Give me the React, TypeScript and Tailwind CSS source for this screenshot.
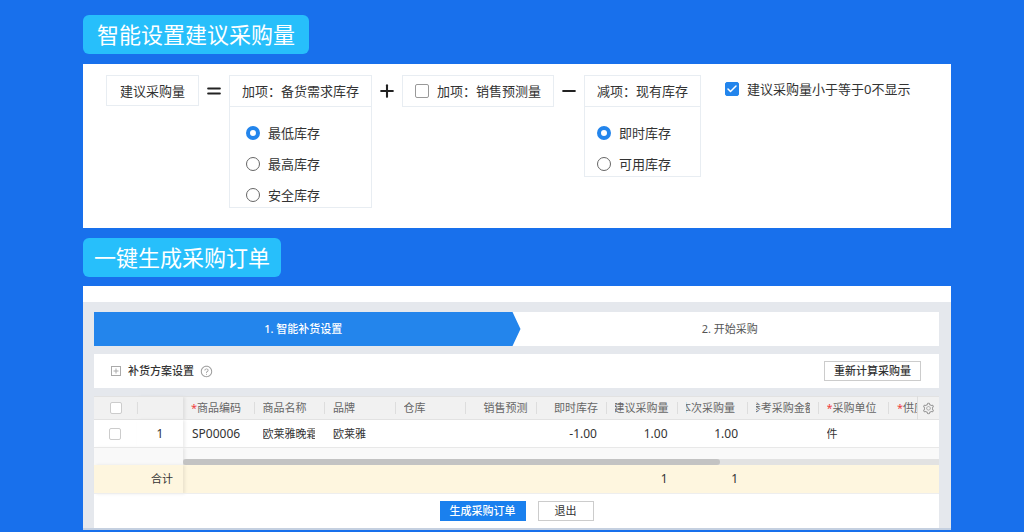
import { useState } from 'react'
import type { ReactNode } from 'react'
import { Check, Equal, Minus, Plus } from 'lucide-react'
import { AiOutlineQuestionCircle, AiOutlineSetting } from 'react-icons/ai'

interface Column {
  key: string
  label: string
  required?: boolean
  align?: string
  value?: string
  total?: string
}

const columns: Column[] = [
  { key: 'code', label: '商品编码', required: true, value: 'SP00006' },
  { key: 'name', label: '商品名称', value: '欧莱雅晚霜' },
  { key: 'brand', label: '品牌', value: '欧莱雅' },
  { key: 'warehouse', label: '仓库' },
  { key: 'forecast', label: '销售预测', align: 'justify-end' },
  { key: 'stock', label: '即时库存', align: 'justify-end', value: '-1.00' },
  { key: 'suggested', label: '建议采购量', align: 'justify-end', value: '1.00', total: '1' },
  { key: 'current', label: '本次采购量', align: 'justify-end', value: '1.00', total: '1' },
  { key: 'amount', label: '参考采购金额', align: 'justify-center' },
  { key: 'unit', label: '采购单位', required: true, value: '件' },
]

function SectionTitle({ className, children }: { className: string; children: ReactNode }) {
  return (
    <h2 className={`flex h-[39px] w-fit items-center rounded-md bg-[#27bffb] pb-0.5 text-[22px] leading-8 text-white ${className}`}>
      {children}
    </h2>
  )
}

function CheckBox({ label, checked, onChange }: { label: string; checked: boolean; onChange: () => void }) {
  return (
    <label className="flex items-center gap-2 whitespace-nowrap">
      <span className="relative flex">
        <input
          type="checkbox"
          checked={checked}
          onChange={onChange}
          className="size-3.5 appearance-none rounded-xs border border-[#999] bg-white checked:border-[#2385ec] checked:bg-[#2385ec]"
        />
        {checked && (
          <Check size={12} strokeWidth={3} className="pointer-events-none absolute top-px left-px text-white" />
        )}
      </span>
      {label}
    </label>
  )
}

interface RadioBoxProps {
  title: string
  name: string
  options: string[]
  indent: string
}

function RadioBox({ title, name, options, indent }: RadioBoxProps) {
  const [selected, setSelected] = useState(options[0])

  return (
    <fieldset className="border border-[#e8edf2]">
      <div className="flex h-[31px] items-center border-b border-[#e8edf2] px-3 whitespace-nowrap">{title}</div>
      <div className={`flex flex-col gap-[7px] pt-3.5 ${indent}`}>
        {options.map(option => (
          <label key={option} className="flex h-6 items-center gap-2">
            <input
              type="radio"
              name={name}
              checked={selected === option}
              onChange={() => setSelected(option)}
              className="size-3.5 appearance-none rounded-full border border-[#666] bg-white checked:border-4 checked:border-[#2385ec]"
            />
            {option}
          </label>
        ))}
      </div>
    </fieldset>
  )
}

function Operator({ children }: { children: ReactNode }) {
  return <div className="flex h-[31px] w-[30px] items-center justify-center text-[#222]">{children}</div>
}

function FormulaCard() {
  const [forecast, setForecast] = useState(false)
  const [hideEmpty, setHideEmpty] = useState(true)

  return (
    <section className="flex h-[164px] items-start bg-white pt-[11px] pl-[23px] text-[13px] leading-5 text-[#333]">
      <div className="flex h-[31px] items-center border border-[#e8edf2] px-[13px] whitespace-nowrap">建议采购量</div>
      <Operator><Equal size={20} strokeWidth={2.5} /></Operator>
      <RadioBox title="加项：备货需求库存" name="demand" options={['最低库存', '最高库存', '安全库存']} indent="pl-4" />
      <Operator><Plus size={20} strokeWidth={2.5} /></Operator>
      <div className="flex h-8 items-center border border-[#e8edf2] px-3">
        <CheckBox label="加项：销售预测量" checked={forecast} onChange={() => setForecast(!forecast)} />
      </div>
      <Operator><Minus size={20} strokeWidth={2.5} /></Operator>
      <RadioBox title="减项：现有库存" name="onhand" options={['即时库存', '可用库存']} indent="pl-3" />
      <div className="flex h-7 items-center pl-6">
        <CheckBox label="建议采购量小于等于0不显示" checked={hideEmpty} onChange={() => setHideEmpty(!hideEmpty)} />
      </div>
    </section>
  )
}

function Steps() {
  return (
    <ol className="flex h-[34px] bg-white text-[11px]">
      <li className="flex flex-1 items-center justify-center bg-[#2385ec] pr-2 font-medium text-white [clip-path:polygon(0_0,calc(100%-8px)_0,100%_50%,calc(100%-8px)_100%,0_100%)]">
        1. 智能补货设置
      </li>
      <li className="flex flex-1 items-center justify-center text-[#555]">2. 开始采购</li>
    </ol>
  )
}

function OrderTable() {
  const box = 'block size-3 appearance-none rounded-xs border border-[#ccc] bg-white checked:bg-[#2385ec]'
  const pinned = 'shadow-[2px_0_3px_rgba(0,0,0,0.08)]'

  return (
    <table className="w-full table-fixed border-collapse text-[11px] leading-4 text-[#333]">
      <colgroup>
        <col className="w-[43px]" />
        <col className="w-[46px]" />
        {columns.map(col => <col key={col.key} />)}
        <col className="w-[29px]" />
        <col className="w-[22px]" />
      </colgroup>
      <thead>
        <tr className="h-[23px] border-y border-[#e2e2e2] bg-[#f1f1f1] text-[#666]">
          <th className="p-0 pl-4"><input type="checkbox" aria-label="全选" className={box} /></th>
          <th className={`p-0 ${pinned}`}><div className="h-3 border-l border-[#ddd]" /></th>
          {columns.map((col, i) => (
            <th key={col.key} className="p-0 font-normal">
              <div className={`flex h-3 items-center px-2 ${i > 0 ? 'border-l border-[#ddd]' : ''}`}>
                <div className={`flex flex-1 overflow-hidden whitespace-nowrap ${col.key === 'current' ? 'mr-1' : ''} ${col.align ?? ''}`}>
                  {col.required && <span className="text-[#f04040]">*</span>}
                  <span>{col.label}</span>
                </div>
              </div>
            </th>
          ))}
          <th className="p-0 font-normal">
            <div className="flex h-3 items-center border-l border-[#ddd] pl-2">
              <div className="flex flex-1 overflow-hidden whitespace-nowrap">
                <span className="text-[#f04040]">*</span>
                <span>供应商</span>
              </div>
            </div>
          </th>
          <th className="border-l border-[#ddd] p-0">
            <button type="button" aria-label="列设置" className="mx-auto block text-[#999]">
              <AiOutlineSetting size={13} />
            </button>
          </th>
        </tr>
      </thead>
      <tbody>
        <tr className="h-7 border-b border-[#e8e8e8] bg-white">
          <td className="p-0 pl-[15px]"><input type="checkbox" aria-label="选择第1行" className={box} /></td>
          <td className={`p-0 text-center text-[12px] ${pinned}`}>1</td>
          {columns.map(col => (
            <td key={col.key} className={`p-0 px-[9px] ${/\d/.test(col.value ?? '') ? 'text-[12px]' : ''}`}>
              <div className={`flex overflow-hidden whitespace-nowrap ${col.align ?? ''}`}>{col.value}</div>
            </td>
          ))}
          <td colSpan={2} />
        </tr>
        <tr className="h-[17px] bg-[#f9f9f9]">
          <td colSpan={2} className={`p-0 ${pinned}`} />
          <td colSpan={12} className="p-0 align-bottom">
            <div className="h-1.5 bg-[#e2e2e2]">
              <div className="h-1.5 w-[71%] rounded-full bg-[#c3c3c3]" />
            </div>
          </td>
        </tr>
      </tbody>
      <tfoot>
        <tr className="h-[29px] border-b border-[#eee] bg-[#fef6df]">
          <td colSpan={2} className={`p-0 pr-2.5 text-right ${pinned}`}>合计</td>
          {columns.map(col => (
            <td key={col.key} className="p-0 px-[9px] text-right text-[12px]">{col.total}</td>
          ))}
          <td colSpan={2} />
        </tr>
      </tfoot>
    </table>
  )
}

function OrderCard() {
  return (
    <section className="border-b-2 border-[#c5d0e0] bg-white pt-4">
      <div className="flex flex-col gap-2 bg-[#e5e8ed] pt-2.5 pr-3 pl-[11px]">
        <Steps />

        <div className="flex h-[34px] items-center justify-between bg-white pr-[18px] pl-4 text-[11px]">
          <div className="flex items-center gap-1.5 font-medium text-[#333]">
            <svg viewBox="0 0 12 12" className="size-3" fill="none" stroke="#aaa">
              <rect x="1.5" y="1.5" width="9" height="9" />
              <path d="M6 3.5v5M3.5 6h5" />
            </svg>
            补货方案设置
            <AiOutlineQuestionCircle size={13} className="text-[#999]" />
          </div>
          <button type="button" className="h-5 border border-[#ccc] bg-white px-[9px] leading-4 font-medium text-[#333]">
            重新计算采购量
          </button>
        </div>

        <div className="bg-white">
          <OrderTable />
          <div className="flex h-[34px] items-center justify-center gap-3 text-[11px] leading-4">
            <button type="button" className="h-5 border border-[#1a80ee] bg-[#1a80ee] px-[9px] font-medium text-white">
              生成采购订单
            </button>
            <button type="button" className="h-5 border border-[#ccc] bg-white px-4 text-[#333]">退出</button>
          </div>
        </div>
      </div>
    </section>
  )
}

export default function App() {
  return (
    <main className="min-h-screen bg-[#1870ec] pt-[15px] pr-[73px] pb-0.5 pl-[83px] font-['Noto_Sans','Noto_Sans_CJK_SC',sans-serif]">
      <SectionTitle className="px-3.5">智能设置建议采购量</SectionTitle>
      <div className="py-2.5"><FormulaCard /></div>
      <SectionTitle className="px-[11px]">一键生成采购订单</SectionTitle>
      <div className="pt-[9px]"><OrderCard /></div>
    </main>
  )
}
